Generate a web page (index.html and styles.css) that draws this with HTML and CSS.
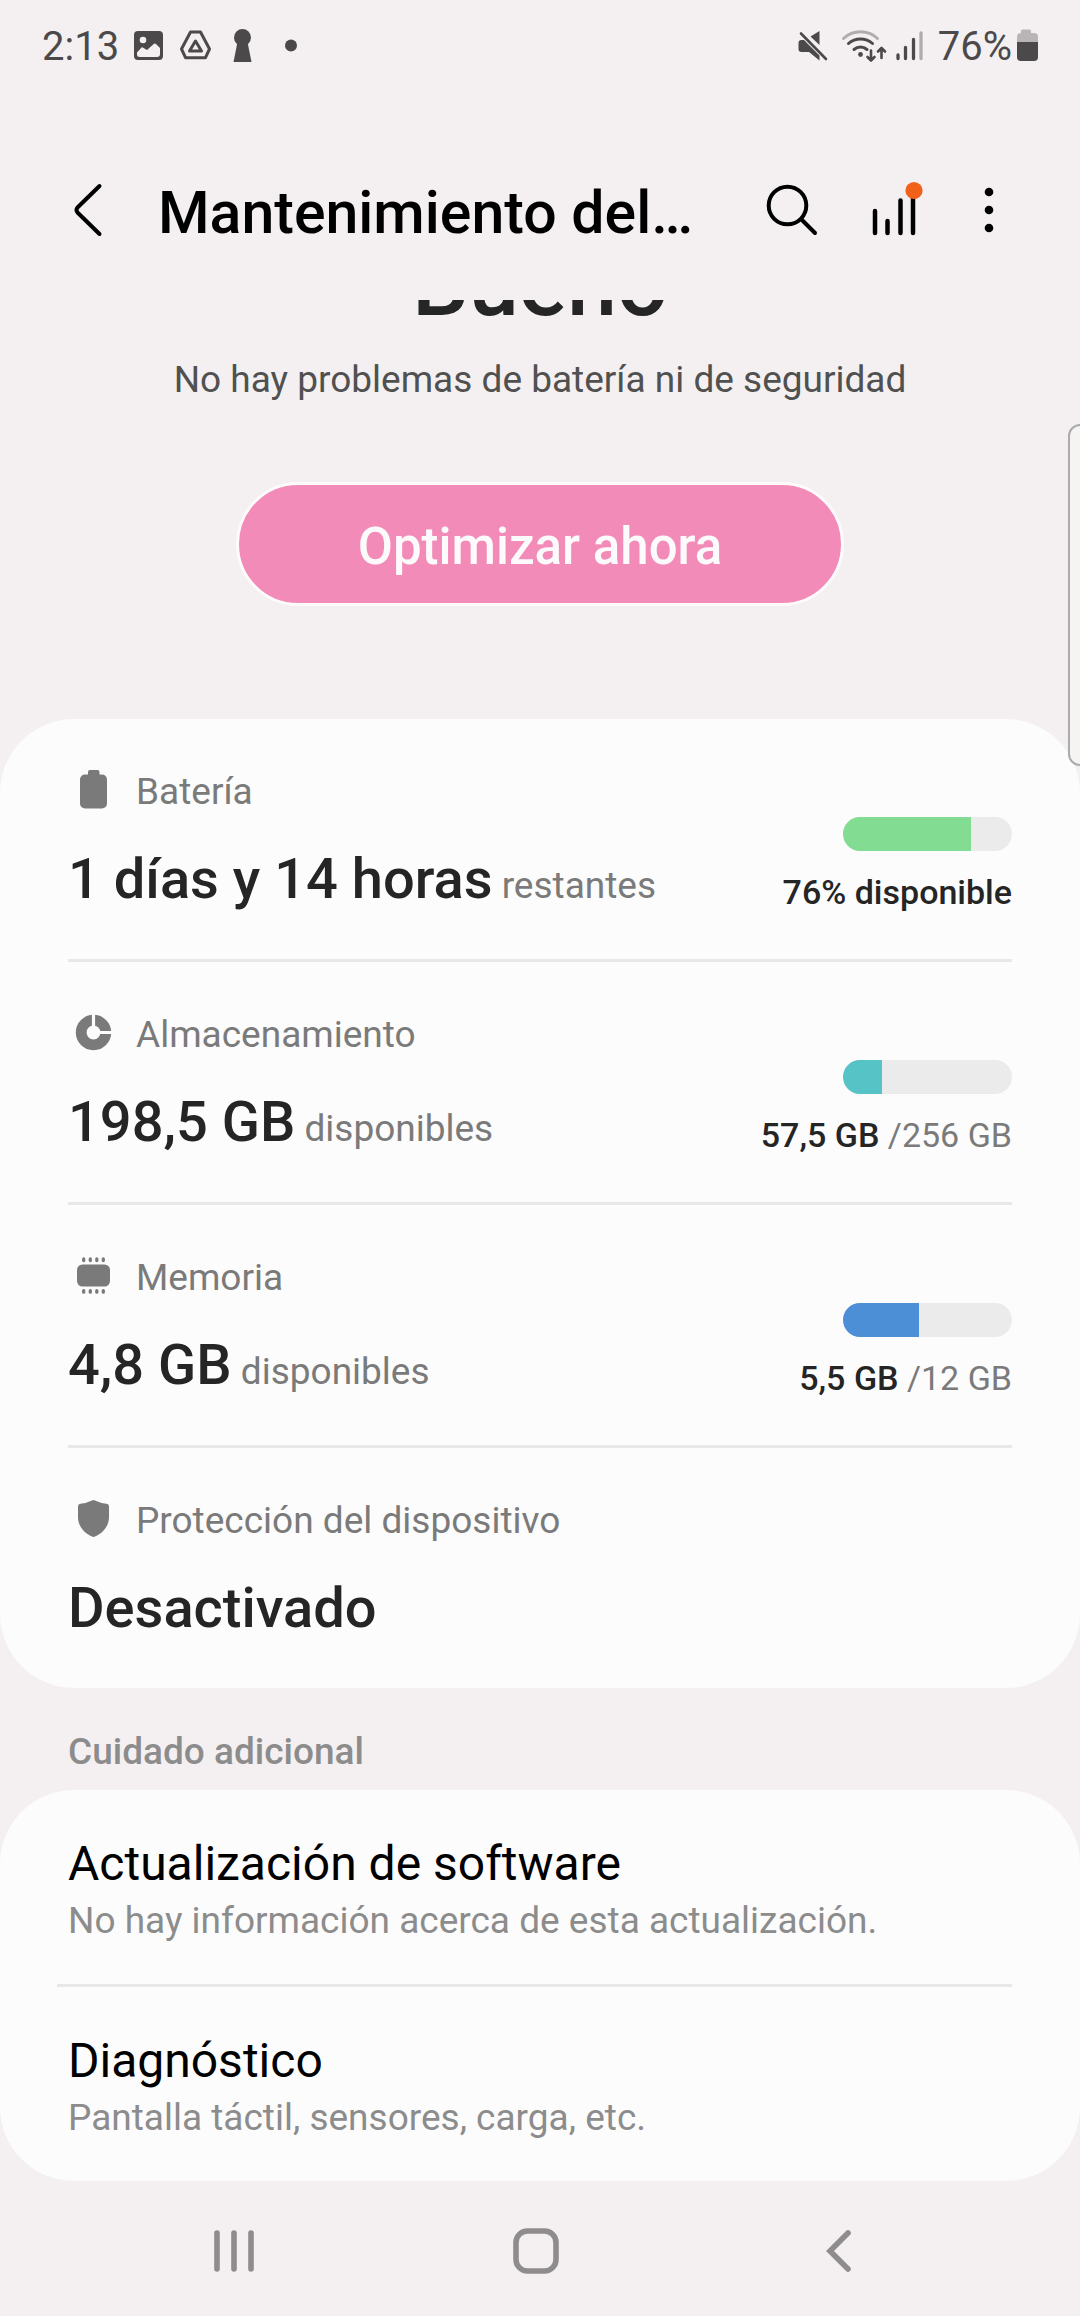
FILE: index.html
```html
<!DOCTYPE html>
<html lang="es">
<head>
<meta charset="utf-8">
<meta name="viewport" content="width=device-width, initial-scale=1">
<title>Mantenimiento del dispositivo</title>
<link rel="stylesheet" href="styles.css">
</head>
<body>
<div class="status-bar">
  <div class="status-left">
    <span>2:13</span>
    <svg width="35" height="34" viewBox="0 0 35 34" aria-hidden="true"><path fill="currentColor" fill-rule="evenodd" d="M7 2H28a4 4 0 0 1 4 4V27a4 4 0 0 1-4 4H7a4 4 0 0 1-4-4V6a4 4 0 0 1 4-4zM12 7.700a3.300 3.300 0 1 0 0 6.600a3.300 3.300 0 0 0 0-6.600zM6 23.500L10.500 18.500Q11.500 18 12.500 19L16 21L23 14.800Q24 14 25 15L29 19V25Q29 28 26 28H9Q6 28 6 25.500z"/></svg>
    <svg width="35" height="34" viewBox="0 0 35 34" aria-hidden="true"><g fill="none" stroke="currentColor" stroke-width="3" stroke-linejoin="round"><path d="M12.500 3H22.500L31.500 20L27.500 28.700H7.500L3.500 20z"/><path d="M17.500 12L23.500 22H11.500z"/></g></svg>
    <svg width="35" height="34" viewBox="0 0 35 34" aria-hidden="true"><g fill="currentColor"><circle cx="17.500" cy="8.500" r="8.500"/><path d="M12.500 13L8.500 33H26.500L22.500 13z"/></g></svg>
    <svg width="39" height="34" viewBox="0 0 39 34" aria-hidden="true"><circle cx="19" cy="16.500" r="6" fill="currentColor"/></svg>
  </div>
  <div class="status-right">
    <svg width="42" height="34" viewBox="0 0 42 34" aria-hidden="true"><path fill="currentColor" d="M14.500 7.500L23.500 2V16zM2.500 14Q2.500 11 5.500 11H8L23.500 26.500V31.500L13 23H5.500Q2.500 23 2.500 20z"/><path fill="none" stroke="currentColor" stroke-width="2.600" stroke-linecap="round" d="M5 4.500L30 30"/></svg>
    <svg width="54" height="34" viewBox="0 0 54 34" aria-hidden="true"><g fill="none" stroke="currentColor" stroke-width="3" stroke-linecap="round"><path opacity="0.400" d="M5.500 9.500A25 25 0 0 1 39.500 9.500"/><path d="M10.500 14.500A18 18 0 0 1 34.500 14.500"/><path d="M16 20.500A10 10 0 0 1 29 20.500"/><path stroke-width="2.600" stroke-linejoin="round" d="M33 21.500V31M29.500 28L33 31.500L36.500 28M43.500 29V19.500M40 22.500L43.500 19L47 22.500"/></g><circle cx="22.500" cy="25.500" r="2.400" fill="currentColor"/></svg>
    <svg width="44" height="34" viewBox="0 0 44 34" aria-hidden="true"><g stroke="currentColor" stroke-width="3.300" stroke-linecap="round"><path d="M6 26V29.500M13.500 18.500V29.500M21.500 10.500V29.500"/><path opacity="0.400" d="M29 4V29.500"/></g></svg>
    <span class="battery-level">76%</span>
    <svg width="26" height="34" viewBox="0 0 26 34" aria-hidden="true"><path fill="currentColor" opacity="0.350" d="M8.500 0.500H15.500Q17 0.500 17 2V4H20Q24 4 24 8V13H3V8Q3 4 7 4V2Q7 0.500 8.500 0.500z"/><path fill="currentColor" d="M3 13H24V28Q24 32 20 32H7Q3 32 3 28z"/></svg>
  </div>
</div>

<header class="app-bar">
  <button class="icon-button back" type="button" aria-label="Atrás"><svg width="96" height="100" viewBox="0 0 96 100"><path fill="none" stroke="currentColor" stroke-width="4" stroke-linecap="round" stroke-linejoin="round" d="M59.500 26L37.500 47.500Q35.500 50 37.500 52.500L59.500 74"/></svg></button>
  <h1 class="app-title">Mantenimiento del…</h1>
  <button class="icon-button" type="button" aria-label="Buscar"><svg width="100" height="100" viewBox="0 0 100 100"><g fill="none" stroke="currentColor" stroke-width="4" stroke-linecap="round"><circle cx="45.500" cy="45.500" r="18.800"/><path d="M59.500 59.500L73 73"/></g></svg></button>
  <button class="icon-button" type="button" aria-label="Gráficos"><svg width="100" height="100" viewBox="0 0 100 100"><path stroke="currentColor" stroke-width="4.500" stroke-linecap="round" d="M33 51V73M45.500 61V73M58.500 40.500V73M71 34V73"/><circle cx="72" cy="30.500" r="8.600" fill="#f1611a"/></svg></button>
  <button class="icon-button" type="button" aria-label="Más opciones"><svg width="100" height="100" viewBox="0 0 100 100"><g fill="currentColor"><circle cx="47" cy="32" r="4.300"/><circle cx="47" cy="50" r="4.300"/><circle cx="47" cy="68" r="4.300"/></g></svg></button>
</header>

<main class="content">
  <section class="summary">
    <h2 class="summary-state">Bueno</h2>
    <p class="summary-text">No hay problemas de batería ni de seguridad</p>
    <button class="optimize" type="button">Optimizar ahora</button>
  </section>

  <section class="card stats">
    <a class="stat" href="#bateria">
      <div class="stat-main">
        <div class="stat-label"><svg width="50" height="50" viewBox="0 0 50 50" aria-hidden="true"><g fill="currentColor"><rect x="12" y="7.500" width="27" height="34" rx="5"/><rect x="20" y="3" width="11.500" height="9" rx="2"/></g></svg>Batería</div>
        <div class="stat-value">1 días y 14 horas<span class="unit"> restantes</span></div>
      </div>
      <div class="stat-side">
        <div class="meter"><div class="meter-fill green" style="width:76%"></div></div>
        <div class="stat-usage">76% disponible</div>
      </div>
    </a>
    <a class="stat" href="#almacenamiento">
      <div class="stat-main">
        <div class="stat-label"><svg width="50" height="50" viewBox="0 0 50 50" aria-hidden="true"><circle cx="25.500" cy="22.500" r="12.300" fill="none" stroke="currentColor" stroke-width="10.800"/><path stroke="#fcfcfc" stroke-width="3.200" d="M25.500 3V19M29 22.500H45"/></svg>Almacenamiento</div>
        <div class="stat-value">198,5 GB<span class="unit"> disponibles</span></div>
      </div>
      <div class="stat-side">
        <div class="meter"><div class="meter-fill teal" style="width:23%"></div></div>
        <div class="stat-usage">57,5 GB <span class="total">/256 GB</span></div>
      </div>
    </a>
    <a class="stat" href="#memoria">
      <div class="stat-main">
        <div class="stat-label"><svg width="50" height="50" viewBox="0 0 50 50" aria-hidden="true"><rect x="9" y="11.500" width="33" height="22" rx="5.500" fill="currentColor"/><path stroke="currentColor" stroke-width="3.300" stroke-linecap="round" d="M15.700 6V7.500M22.300 6V7.500M28.800 6V7.500M35.300 6V7.500M15.700 37.700V39.200M22.300 37.700V39.200M28.800 37.700V39.200M35.300 37.700V39.200"/></svg>Memoria</div>
        <div class="stat-value">4,8 GB<span class="unit"> disponibles</span></div>
      </div>
      <div class="stat-side">
        <div class="meter"><div class="meter-fill blue" style="width:45%"></div></div>
        <div class="stat-usage">5,5 GB <span class="total">/12 GB</span></div>
      </div>
    </a>
    <a class="stat" href="#proteccion">
      <div class="stat-main">
        <div class="stat-label"><svg width="50" height="50" viewBox="0 0 50 50" aria-hidden="true"><path fill="currentColor" d="M24 4.500Q25.500 3.700 27 4.500Q32 7 38.500 7.700Q41 8 41 10.500V21C41 30 35 37 27 40.500Q25.500 41.300 24 40.500C16 37 10 30 10 21V10.500Q10 8 12.500 7.700Q19 7 24 4.500z"/></svg>Protección del dispositivo</div>
        <div class="stat-value">Desactivado</div>
      </div>
    </a>
  </section>

  <h2 class="section-title">Cuidado adicional</h2>
  <section class="card links">
    <a class="link-row" href="#actualizacion">
      <span class="link-title">Actualización de software</span>
      <span class="link-text">No hay información acerca de esta actualización.</span>
    </a>
    <a class="link-row" href="#diagnostico">
      <span class="link-title">Diagnóstico</span>
      <span class="link-text">Pantalla táctil, sensores, carga, etc.</span>
    </a>
  </section>
  <div class="edge-handle"></div>
</main>

<nav class="nav-bar">
  <button class="nav-button" type="button" aria-label="Recientes"><svg width="50" height="50" viewBox="0 0 50 50"><path stroke="currentColor" stroke-width="5.600" stroke-linecap="round" d="M8 7V43M25 7V43M42 7V43"/></svg></button>
  <button class="nav-button" type="button" aria-label="Inicio"><svg width="50" height="50" viewBox="0 0 50 50"><rect x="5" y="5" width="40" height="40" rx="11.500" fill="none" stroke="currentColor" stroke-width="5.600"/></svg></button>
  <button class="nav-button" type="button" aria-label="Atrás"><svg width="50" height="50" viewBox="0 0 50 50"><path fill="none" stroke="currentColor" stroke-width="5.600" stroke-linecap="round" d="M35 7L17 25L35 43"/></svg></button>
</nav>
</body>
</html>
```

FILE: styles.css
```css
* {
  box-sizing: border-box;
}

body {
  margin: 0;
  min-height: 100vh;
  display: flex;
  flex-direction: column;
  background: #f4f0f1;
  color: #000;
  font-family: Roboto, "Noto Sans", sans-serif;
}

h1, h2, p {
  margin: 0;
  font-weight: 500;
}

button {
  margin: 0;
  padding: 0;
  border: 0;
  background: none;
  color: inherit;
  font: inherit;
}

a {
  color: inherit;
  text-decoration: none;
}

svg {
  display: block;
  flex: none;
}

/* Status bar */
.status-bar {
  display: flex;
  justify-content: space-between;
  height: 92px;
  padding: 0 40px 0 42px;
  color: #4b494a;
  font-size: 40px;
}

.status-left,
.status-right {
  display: flex;
  align-items: center;
}

.status-left {
  gap: 12px;
}

.battery-level {
  margin: 0 2px;
}

/* App bar */
.app-bar {
  display: flex;
  align-items: center;
  height: 208px;
  padding: 28px 38px 0 40px;
}

.icon-button {
  flex: none;
}

.app-title {
  flex: 1;
  min-width: 0;
  padding: 6px 0 0 22px;
  font-size: 59px;
  line-height: 72px;
  white-space: nowrap;
  overflow: hidden;
}

/* Scrolling content */
.content {
  position: relative;
  flex: 1;
  overflow: hidden;
}

.summary {
  display: flex;
  flex-direction: column;
  align-items: center;
  margin-top: -65px;
  padding-bottom: 113px;
}

.summary-state {
  color: #252525;
  font-size: 90px;
  line-height: 100px;
}

.summary-text {
  margin: 20px 0 77px;
  color: #505050;
  font-size: 37px;
  font-weight: 400;
  line-height: 50px;
}

.optimize {
  width: 608px;
  max-width: 90%;
  height: 124px;
  padding-top: 4px;
  border: 3px solid #fdfafc;
  border-radius: 62px;
  background: #f28bb7;
  color: #fdfafc;
  font-size: 51px;
  font-weight: 500;
}

.card {
  border-radius: 74px;
  background: #fcfcfc;
}

.stats {
  padding: 0 68px;
}

.stat {
  display: flex;
  align-items: flex-end;
  justify-content: space-between;
  padding: 48px 0 47px;
}

.stat + .stat {
  border-top: 3px solid #e8e8e8;
}

.stat-label {
  display: flex;
  align-items: center;
  gap: 18px;
  margin-bottom: 29px;
  color: #7a7a7a;
  font-size: 37px;
  line-height: 50px;
}

.stat-value {
  color: #252525;
  font-size: 56px;
  font-weight: 500;
  line-height: 66px;
}

.unit {
  color: #7a7a7a;
  font-size: 37px;
  font-weight: 400;
  line-height: 1;
}

.stat-side {
  display: flex;
  flex-direction: column;
  align-items: flex-end;
  gap: 21px;
}

.meter {
  width: 169px;
  height: 34px;
  border-radius: 17px;
  background: #ebebeb;
  overflow: hidden;
}

.meter-fill {
  height: 100%;
}

.green { background: #82dd92; }
.teal { background: #56c3c6; }
.blue { background: #4c8fd6; }

.stat-usage {
  color: #252525;
  font-size: 34px;
  font-weight: 500;
  line-height: 40px;
}

.total {
  color: #7a7a7a;
  font-weight: 400;
}

.section-title {
  padding: 39px 68px 13px;
  color: #8c8c8c;
  font-size: 37px;
  line-height: 50px;
}

.links {
  padding: 0 68px 0 57px;
}

.link-row {
  display: flex;
  flex-direction: column;
  gap: 2px;
  padding: 44px 0 38px 11px;
}

.link-row + .link-row {
  border-top: 3px solid #e8e8e8;
}

.link-title {
  font-size: 48px;
  line-height: 60px;
}

.link-text {
  color: #8c8c8c;
  font-size: 37px;
  line-height: 50px;
}

/* Edge panel handle, over the content at the right side */
.edge-handle {
  position: absolute;
  top: 124px;
  right: -12px;
  width: 24px;
  height: 342px;
  border: 2px solid #ababab;
  border-radius: 12px;
  background: rgba(255, 255, 255, 0.2);
}

/* Navigation bar */
.nav-bar {
  display: flex;
  align-items: center;
  height: 135px;
  padding: 4px 91px 0 83px;
  color: #8e8c8d;
}

.nav-button {
  flex: 1;
  display: flex;
  justify-content: center;
}
```
